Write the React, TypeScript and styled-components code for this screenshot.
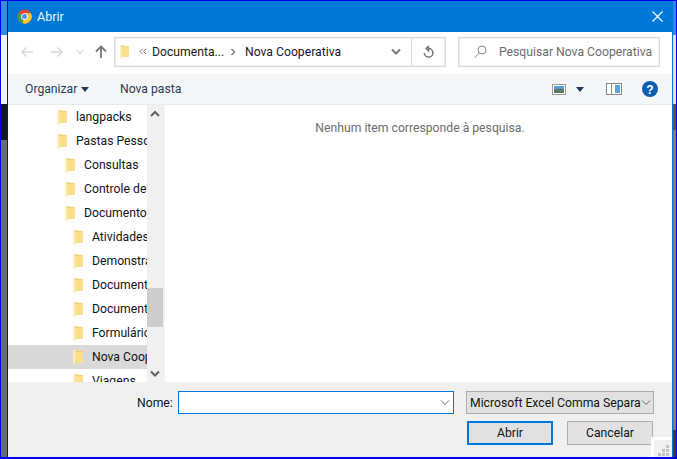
import React from "react";
import styled, { createGlobalStyle } from "styled-components";

const Global = createGlobalStyle`
  html, body { margin: 0; padding: 0; background: #6c6c6c; }
  * { box-sizing: border-box; }
  body { font-family: Roboto, "Open Sans", "Liberation Sans", sans-serif; font-size: 12px; }
`;

const Screen = styled.div`
  width: 677px; height: 459px; display: flex; overflow: hidden;
  border: solid #0000f5; border-width: 1px 1px 2px 1px;
`;
const Strip = styled.div<{ $w: number }>`
  width: ${p => p.$w}px; flex: none; display: flex; flex-direction: column;
`;
const StripBlock = styled.div<{ $h?: number; $c: string }>`
  background: ${p => p.$c};
  ${p => (p.$h ? `height: ${p.$h}px; flex: none;` : "flex: 1;")}
`;
const Dialog = styled.div`
  width: 666px; flex: none; display: flex; flex-direction: column; position: relative;
  border-left: 1px solid #0000f5; border-right: 1px solid #0078d7; background: #fff;
`;
const TitleBar = styled.div`
  height: 31px; flex: none; background: #0078d7; display: flex; align-items: center;
  padding: 0 9px 0 9px; gap: 5px; color: #eaf4fc; font-size: 12.5px;
`;
const TitleText = styled.span`flex: 1; line-height: 30px;`;
const NavBar = styled.div`
  height: 42px; flex: none; display: flex; align-items: center; padding: 0 12px 3px 12px;
`;
const NavIcon = styled.svg<{ $w: number }>`
  width: ${p => p.$w}px; flex: none; display: block;
`;
const AddressBox = styled.div`
  width: 332px; height: 30px; margin-left: 6px; flex: none; border: 1px solid #d9d9d9; box-shadow: inset 0 0 0 0.5px #e6e6e6;
  display: flex; align-items: center; padding-left: 5px; color: #1a1a1a; font-size: 12.2px; white-space: nowrap;
`;
const Crumb = styled.span<{ $ml: number; $w: number }>`margin-left: ${p => p.$ml}px; width: ${p => p.$w}px; flex: none;`;
const AddressSpacer = styled.div`flex: 1;`;
const RefreshCell = styled.div`
  width: 34px; height: 100%; border-left: 1px solid #d9d9d9; margin-left: 10px;
  display: flex; align-items: center; justify-content: center;
`;
const SearchBox = styled.div`
  width: 202px; height: 30px; margin-left: 12px; flex: none; border: 1px solid #d9d9d9; box-shadow: inset 0 0 0 0.5px #e6e6e6;
  display: flex; align-items: center; padding-left: 15px; gap: 12px; color: #6d6d6d; font-size: 12.2px; white-space: nowrap;
`;
const Toolbar = styled.div`
  height: 31px; flex: none; background: #f5f6f7; border-bottom: 1px solid #e8e9ea;
  display: flex; align-items: center; padding: 0 14px 0 17px; color: #2b3a55; font-size: 12.2px;
`;
const ToolLabel = styled.span<{ $ml?: number; $w?: number }>`
  margin-left: ${p => p.$ml ?? 0}px; display: flex; flex: none;
  ${p => (p.$w ? `width: ${p.$w}px;` : "")}
`;
const Main = styled.div`flex: 1; min-height: 0; display: flex; background: #fff;`;
const Tree = styled.div`width: 139px; flex: none; overflow: hidden;`;
const TreeRow = styled.div<{ $level: number; $selected?: boolean }>`
  height: 24px; display: flex; align-items: center; gap: 9px; white-space: nowrap; color: #141414; font-size: 12.2px;
  padding-left: ${p => 41 + p.$level * 8}px;
  background: ${p => (p.$selected ? "#d9d9d9" : "transparent")};
`;
const Scrollbar = styled.div`
  width: 17px; flex: none; background: #f0f0f0; display: flex; flex-direction: column; padding-right: 1px;
`;
const ScrollEnd = styled.div`
  height: 17px; flex: none; display: flex; align-items: center; justify-content: center;
`;
const ScrollThumb = styled.div`
  height: 39px; margin-top: 166px; background: #cdcdcd; flex: none;
`;
const ScrollFill = styled.div`flex: 1;`;
const ListPane = styled.div`
  flex: 1; border-left: 1px solid #f2f2f2; text-align: center; color: #6d6d6d; font-size: 12.2px; padding: 14px 0 0 3px; line-height: 18px;
`;
const Footer = styled.div`
  height: 75px; flex: none; background: #f0f0f0; position: relative; padding: 9px 0 0 129px;
  display: flex; flex-direction: column;
`;
const FieldRow = styled.div`display: flex; align-items: center; height: 23px;`;
const NameLabel = styled.label`width: 41px; flex: none; color: #141414; font-size: 12.2px;`;
const NameInput = styled.div`
  width: 276px; height: 23px; flex: none; background: #fff; border: 1px solid #0078d7;
  display: flex; align-items: center; justify-content: flex-end; padding-right: 3px;
`;
const TypeSelect = styled.div`
  width: 188px; height: 23px; margin-left: 12px; flex: none; background: #e1e1e1; border: 1px solid #adadad;
  display: flex; align-items: center; justify-content: space-between; padding: 0 3px 0 3px; color: #141414; font-size: 12.2px; white-space: nowrap; overflow: hidden;
`;
const ButtonRow = styled.div`display: flex; margin: 7px 0 0 330px; gap: 14px;`;
const DialogButton = styled.button<{ $primary?: boolean }>`
  width: 86px; height: 24px; padding: 0; background: #e1e1e1; color: #141414; font: inherit; font-size: 12.2px;
  border: ${p => (p.$primary ? "2px solid #0078d7" : "1px solid #adadad")};
`;
const GripPatch = styled.div`
  position: absolute; right: 0; bottom: 0; width: 21px; height: 20px; border-top: 3px solid #fff;
  border-left: 3px solid #fff; background: #f0f0f0; display: flex; align-items: flex-end; justify-content: flex-end; padding: 0 3px 1px 0;
`;

const Folder = ({ w = 10, h = 15 }: { w?: number; h?: number }) => (
  <svg width={w} height={h} viewBox="0 0 10 15" style={{ flex: "none" }}>
    <path d="M0 0h4l1 1h5v12H3l-3 2z" fill="#f3cf6c" />
    <path d="M2.500 2H10v11H2.500z" fill="#fbdf8c" />
    <path d="M0 0h2.500v13L0 15z" fill="#fdeeb9" />
  </svg>
);
const Chevron = ({ c = "#666", up = false, w = 2 }: { c?: string; up?: boolean; w?: number }) => (
  <svg width="10" height="7" viewBox="0 0 10 7" style={{ flex: "none" }}>
    <path d={up ? "M1 6l4-4 4 4" : "M1 1.500l4 4 4-4"} fill="none" stroke={c} strokeWidth={w} />
  </svg>
);
const Caret = () => (
  <svg width="8" height="5" viewBox="0 0 8 5"><path d="M0 0h8L4 5z" fill="#1f3a5f" /></svg>
);

const rows: [number, string, boolean?][] = [
  [1, "langpacks"], [1, "Pastas Pessoais"], [2, "Consultas"], [2, "Controle de"], [2, "Documentos"],
  [3, "Atividades"], [3, "Demonstrativos"], [3, "Documentos"], [3, "Documentos"], [3, "Formulários"],
  [3, "Nova Cooperativa", true], [3, "Viagens"],
];

export default function App() {
  return (
    <Screen>
      <Global />
      <Strip $w={6}>
        <StripBlock $h={34} $c="#2f8ede" />
        <StripBlock $h={69} $c="#f1f1f1" />
        <StripBlock $h={36} $c="#14181c" />
        <StripBlock $c="#6c6c6c" />
      </Strip>
      <Dialog>
        <TitleBar>
          <svg width="15" height="15" viewBox="0 0 16 16" style={{ flex: "none" }}>
            <circle cx="8" cy="8" r="7.500" fill="#e0483a" />
            <path d="M8 8L1.600 4.200A7.500 7.500 0 0 0 6 15.200z" fill="#43a047" />
            <path d="M8 4.500h6.900A7.500 7.500 0 0 1 6 15.200z" fill="#f7c52c" />
            <circle cx="8" cy="8" r="3.600" fill="#fff" />
            <circle cx="8" cy="8" r="2.700" fill="#4a8fe8" />
          </svg>
          <TitleText>Abrir</TitleText>
          <svg width="11" height="11" viewBox="0 0 11 11" style={{ marginBottom: 1 }}>
            <path d="M.5.5l10 10M10.500.5l-10 10" stroke="#fff" strokeWidth="1.100" />
          </svg>
        </TitleBar>
        <NavBar>
          <NavIcon $w={14} height="12" viewBox="0 0 14 12"><path d="M13 6H2M6.500 1.500L2 6l4.500 4.500" fill="none" stroke="#d9d9d9" strokeWidth="1.600" /></NavIcon>
          <NavIcon $w={14} height="12" viewBox="0 0 14 12" style={{ marginLeft: 16 }}><path d="M1 6h11M7.500 1.500L12 6l-4.500 4.500" fill="none" stroke="#d9d9d9" strokeWidth="1.600" /></NavIcon>
          <NavIcon $w={8} height="6" viewBox="0 0 8 6" style={{ marginLeft: 12 }}><path d="M1 1.500l3 3 3-3" fill="none" stroke="#d9d9d9" strokeWidth="1.300" /></NavIcon>
          <NavIcon $w={12} height="13" viewBox="0 0 12 13" style={{ marginLeft: 11 }}><path d="M6 13V2M1 6.500L6 1.500l5 5" fill="none" stroke="#7a7a7a" strokeWidth="1.800" /></NavIcon>
          <AddressBox style={{ marginLeft: 7 }}>
            <Folder w={9} h={14} />
            <svg width="8" height="7" viewBox="0 0 8 7" style={{ marginLeft: 10, flex: "none" }}><path d="M3.500 1L1 3.500 3.500 6M7 1L4.500 3.500 7 6" fill="none" stroke="#777" strokeWidth="1" /></svg>
            <Crumb $ml={5} $w={73}>Documenta...</Crumb>
            <svg width="6" height="8" viewBox="0 0 6 8" style={{ marginLeft: 5, flex: "none" }}><path d="M1.500 1l3 3-3 3" fill="none" stroke="#777" strokeWidth="1.400" /></svg>
            <Crumb $ml={9} $w={97}>Nova Cooperativa</Crumb>
            <AddressSpacer />
            <Chevron c="#7a7a7a" />
            <RefreshCell>
              <svg width="11" height="12" viewBox="0 0 11 12"><path d="M5.500 2.500a4.300 4.300 0 1 1-4.200 4.500M5.500.3v4.400l-2.400-2.200z" fill="none" stroke="#777" strokeWidth="1.500" /></svg>
            </RefreshCell>
          </AddressBox>
          <SearchBox>
            <svg width="13" height="14" viewBox="0 0 13 14" style={{ flex: "none" }}><circle cx="8" cy="5" r="4" fill="none" stroke="#8a8a8a" strokeWidth="1" /><path d="M5 8l-4.500 5" stroke="#a88" strokeWidth="1" /></svg>
            <span>Pesquisar Nova Cooperativa</span>
          </SearchBox>
        </NavBar>
        <Toolbar>
          <ToolLabel $w={56}>Organizar</ToolLabel>
          <ToolLabel><Caret /></ToolLabel>
          <ToolLabel $ml={31}>Nova pasta</ToolLabel>
          <AddressSpacer />
          <svg width="14" height="11" viewBox="0 0 14 11"><rect x=".5" y=".5" width="13" height="10" fill="#fff" stroke="#999" /><rect x="2" y="2" width="10" height="3" fill="#5b9bd5" /><rect x="2" y="5" width="10" height="4" fill="#5d7a5d" /></svg>
          <ToolLabel $ml={10}><Caret /></ToolLabel>
          <svg width="16" height="12" viewBox="0 0 16 12" style={{ marginLeft: 22 }}><rect x=".5" y=".5" width="15" height="11" fill="#fff" stroke="#8a8a8a" /><rect x="9" y="2" width="5" height="8" fill="#5aa5e6" /><rect x="5" y="1" width="1" height="10" fill="#8a8a8a" /></svg>
          <svg width="16" height="16" viewBox="0 0 16 16" style={{ marginLeft: 20 }}><circle cx="8" cy="8" r="8" fill="#0a5fb4" /><text x="8" y="12.500" textAnchor="middle" fontSize="12" fontWeight="700" fill="#fff" fontFamily="Liberation Sans, sans-serif">?</text></svg>
        </Toolbar>
        <Main>
          <Tree>
            {rows.map(([level, name, selected], i) => (
              <TreeRow key={i} $level={level} $selected={selected}>
                <Folder />
                <span>{name}</span>
              </TreeRow>
            ))}
          </Tree>
          <Scrollbar>
            <ScrollEnd><Chevron up c="#606060" /></ScrollEnd>
            <ScrollThumb />
            <ScrollFill />
            <ScrollEnd><Chevron c="#606060" /></ScrollEnd>
          </Scrollbar>
          <ListPane>Nenhum item corresponde à pesquisa.</ListPane>
        </Main>
        <Footer>
          <FieldRow>
            <NameLabel>Nome:</NameLabel>
            <NameInput><Chevron c="#666" w={1} /></NameInput>
            <TypeSelect>
              <span>Microsoft Excel Comma Separa</span>
              <Chevron c="#666" w={1} />
            </TypeSelect>
          </FieldRow>
          <ButtonRow>
            <DialogButton $primary>Abrir</DialogButton>
            <DialogButton>Cancelar</DialogButton>
          </ButtonRow>
          <GripPatch>
            <svg width="11" height="11" viewBox="0 0 11 11"><path d="M8 0h3v3H8zM4 4h3v3H4zM8 4h3v3H8zM0 8h3v3H0zM4 8h3v3H4zM8 8h3v3H8z" fill="#c4c4c4" /></svg>
          </GripPatch>
        </Footer>
      </Dialog>
      <Strip $w={3}>
        <StripBlock $h={34} $c="#2f8ede" />
        <StripBlock $h={69} $c="#dedede" />
        <StripBlock $h={26} $c="#55565a" />
        <StripBlock $c="#7d7d7d" />
        <StripBlock $h={27} $c="#3c3c3c" />
      </Strip>
    </Screen>
  );
}
